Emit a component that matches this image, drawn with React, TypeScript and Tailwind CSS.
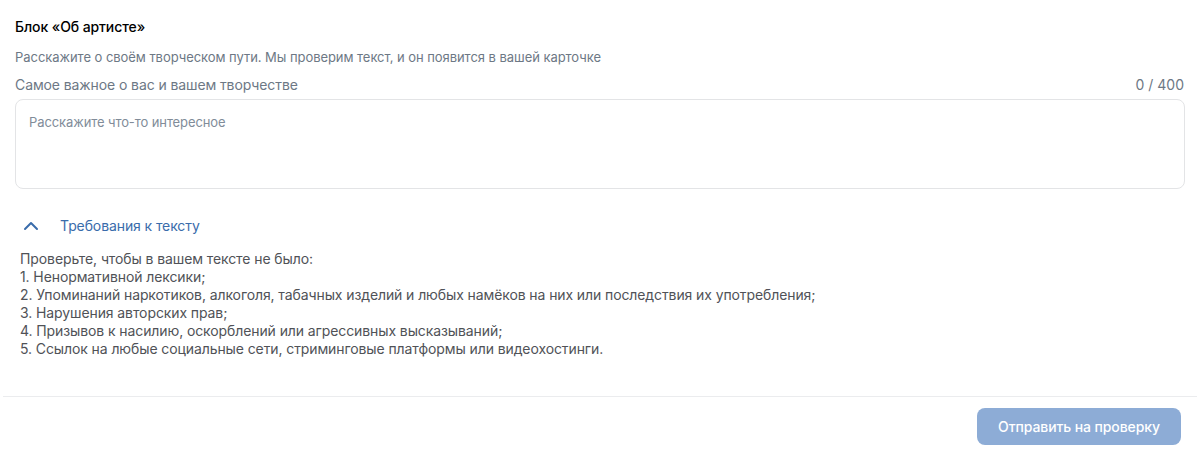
import { ChevronUp } from 'lucide-react';

const rules = [
  '1. Ненормативной лексики;',
  '2. Упоминаний наркотиков, алкоголя, табачных изделий и любых намёков на них или последствия их употребления;',
  '3. Нарушения авторских прав;',
  '4. Призывов к насилию, оскорблений или агрессивных высказываний;',
  '5. Ссылок на любые социальные сети, стриминговые платформы или видеохостинги.',
];

export default function App() {
  return (
    <div className="w-[1200px] h-[456px] bg-white font-['Inter','Noto_Sans',sans-serif] antialiased flex flex-col">
      <div className="flex flex-col px-[15px] pt-[18px] flex-1">
        {/* Header */}
        <h2 className="text-[14px] leading-[18px] font-medium text-black tracking-[-0.1px]">
          Блок «Об артисте»
        </h2>
        <p className="mt-[13px] text-[13px] leading-[16px] text-[#6d7885] tracking-[-0.05px]">
          Расскажите о своём творческом пути. Мы проверим текст, и он появится в вашей карточке
        </p>

        {/* Field */}
        <div className="mt-[11px] flex items-center justify-between pr-[1px]">
          <span className="text-[14px] leading-[18px] text-[#6d7885] tracking-[-0.1px]">
            Самое важное о вас и вашем творчестве
          </span>
          <span className="text-[14px] leading-[18px] text-[#6d7885]">0 / 400</span>
        </div>
        <textarea
          className="mt-[5px] h-[90px] w-full resize-none rounded-[8px] border border-[#e3e4e6] px-[13px] py-[14px] text-[13px] leading-[16px] text-black placeholder:text-[#818c99] outline-none tracking-[-0.1px]"
          placeholder="Расскажите что-то интересное"
        />

        {/* Requirements */}
        <button className="mt-[25px] flex items-center gap-[17px] pl-[4px] text-[#3a6cab]">
          <ChevronUp size={24} strokeWidth={2} />
          <span className="text-[14px] leading-[20px] tracking-[-0.1px]">Требования к тексту</span>
        </button>
        <div className="mt-[12px] pl-[5px] text-[14px] leading-[18px] text-[#505257] tracking-[-0.1px]">
          <p>Проверьте, чтобы в вашем тексте не было:</p>
          {rules.map((r) => (
            <p key={r}>{r}</p>
          ))}
        </div>
      </div>

      {/* Footer */}
      <div className="mx-[3px] border-t border-[#ebecee]" />
      <div className="flex justify-end px-[19px] pt-[11px] pb-[11px]">
        <button
          disabled
          className="h-[37px] w-[204px] rounded-[8px] bg-[#8dacd6] text-[14px] font-medium text-white tracking-[-0.1px]"
        >
          Отправить на проверку
        </button>
      </div>
    </div>
  );
}
